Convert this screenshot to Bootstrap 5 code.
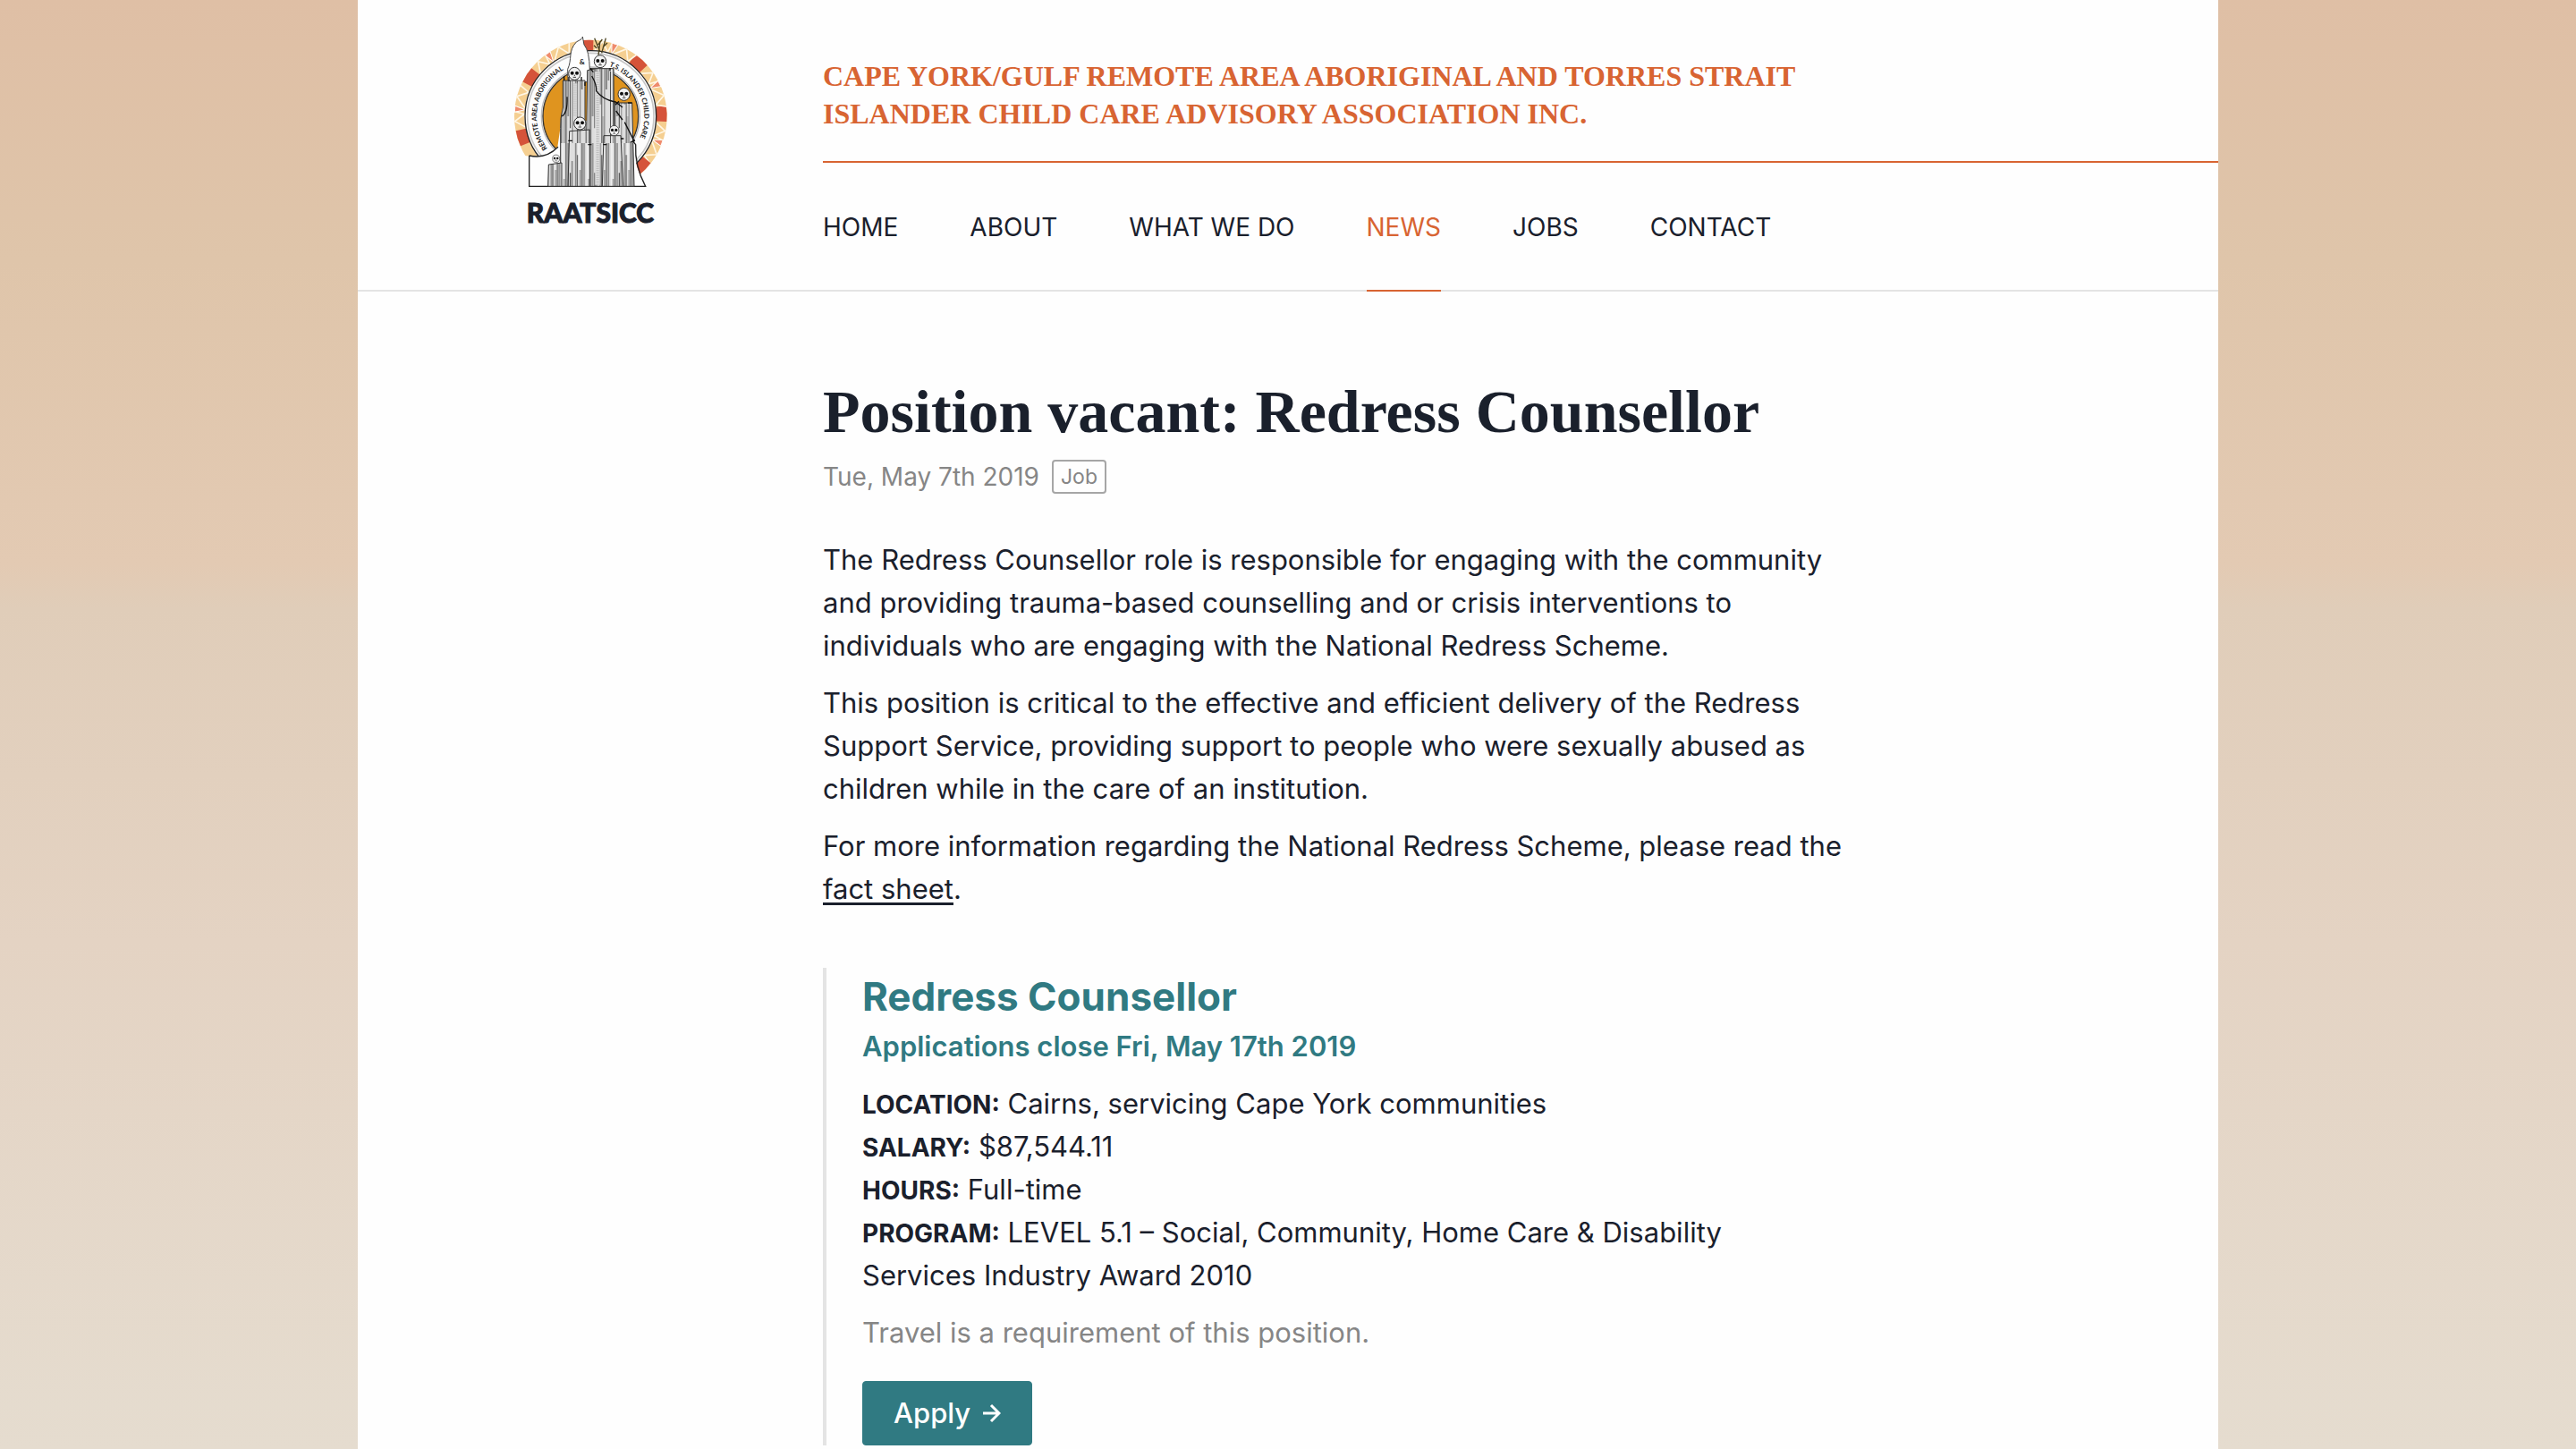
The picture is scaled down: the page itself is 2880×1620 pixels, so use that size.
<!DOCTYPE html>
<html lang="en">
<head>
<meta charset="utf-8">
<meta name="viewport" content="width=device-width, initial-scale=1">
<title>Position vacant: Redress Counsellor – RAATSICC</title>
<link rel="stylesheet" href="https://cdn.jsdelivr.net/npm/bootstrap@5.3.0/dist/css/bootstrap.min.css">
<style>
:root { --ink: #1a202c; --rust: #d86432; --teal: #307a82; --rule: #e4e4e4; --dim: #868686; }
html { overflow: hidden; }
body {
  font-family: Inter, "Liberation Sans", sans-serif;
  font-size: 31px; line-height: 48px; color: var(--ink);
  min-height: 100vh;
  background: linear-gradient(#dfbfa5 0, #dfc5aa 18%, #e3cab3 39%, #e0cdb9 42%, #e4d3c3 65%, #e5dccf 100%);
}
.sheet { width: 72.2223%; min-height: 100vh; background: #fefefe; }
.site-head { border-bottom: 2px solid var(--rule); }
.org-name {
  font: bold 32px/42px "Liberation Serif", serif;
  color: var(--rust); border-bottom: 2px solid var(--rust);
  padding: 64px 0 32px;
}
.brand { color: var(--ink); text-decoration: none; padding-top: 30px; }
.brand svg { width: 200px; height: 184px; }
.brand-word { font: 900 30px/46px Lato, sans-serif; -webkit-text-stroke: 1px currentColor; }
.site-nav { gap: 80px; margin-bottom: -2px; }
.site-nav .nav-link {
  font-size: 28px; line-height: 42px; color: var(--ink);
  padding: 51px 0 49px; border-bottom: 2px solid transparent;
}
.site-nav .nav-link.active { color: var(--rust); border-color: var(--rust); }
.article { padding-top: 98px; }
.article h1 { font: bold 68px/72px "Liberation Serif", serif; margin: 0 0 16px; }
.post-meta { font-size: 28px; line-height: 42px; color: var(--dim); gap: 14px; margin-bottom: 48px; }
.tag { font-size: 23px; line-height: 34px; border: 2px solid #a6a6a6; border-radius: 4px; padding: 0 8px; }
.copy { max-width: 1140px; }
.copy p { margin-bottom: 16px; }
.copy a { color: inherit; text-underline-offset: 4px; }
.vacancy { border-left: 4px solid var(--rule); padding-left: 40px; margin-top: 64px; max-width: 1100px; }
.vacancy h2 { font-size: 44px; line-height: 64px; font-weight: 700; color: var(--teal); margin: 0; }
.closing { font-weight: 600; color: var(--teal); }
.vacancy dt { font-size: 28px; line-height: 32px; display: inline; }
.vacancy dd { display: inline; margin: 0; }
.travel { color: var(--dim); }
.apply-btn { --bs-btn-bg: var(--teal); --bs-btn-color: #fff; --bs-btn-border-color: var(--teal);
  --bs-btn-hover-bg: #28676e; --bs-btn-hover-color: #fff;
  font-size: 31px; line-height: 48px; font-weight: 500; border-radius: 4px; padding: 11px 34px; margin-top: 14px; gap: 14px; }
</style>
</head>
<body>
<div class="sheet mx-auto">
  <header class="site-head row g-0">
    <div class="col-3">
      <a class="brand d-flex flex-column align-items-center" href="#">
        <svg viewBox="0 0 600 552" aria-hidden="true">
          <defs>
            <g id="tile">
              <path d="M220-24 254-27Q258 0 254 27L220 24Z" fill="#d5533a"/>
              <path d="M240 88 232 108 203 85Z" fill="#ef8b6c" stroke="#fff" stroke-width="3"/>
              <path d="M220 30 248 58 210 72 236 88M203 92 217 136 175 137 195 168" fill="none" stroke="#fff6e4" stroke-width="5"/>
            </g>
            <pattern id="grain" width="82" height="390" patternUnits="userSpaceOnUse">
              <rect width="82" height="390" fill="#dedede"/>
              <path d="M5 0V260M19 90V390M33 0V180M48 120V390M62 0V300M75 60V390" stroke="#8a8a8a" stroke-width="5"/>
              <path d="M11 40V390M26 0V210M40 150V390M55 0V390M69 100V340" stroke="#333" stroke-width="3"/>
              <path d="M15 0V300M44 0V390M72 150V390" stroke="#fff" stroke-width="3"/>
            </pattern>
            <g id="mask">
              <ellipse rx="20" ry="21" fill="#f2f2f2" stroke="#333" stroke-width="3"/>
              <circle cx="-8" cy="-2" r="6" fill="#111"/><circle cx="8" cy="-2" r="6" fill="#111"/>
              <path d="M-5 12H5M0 4V8" stroke="#333" stroke-width="3"/>
            </g>
            <path id="arcL" d="M156 408A180 180 0 0 1 241 130"/>
            <path id="arcR" d="M363 132A179 179 0 0 1 440 414"/>
            <clipPath id="ringClip"><path d="M0 0H600V505H420V440H0Z"/></clipPath>
          </defs>
          <g clip-path="url(#ringClip)">
            <circle cx="301" cy="300" r="239" fill="#fff" stroke="#f5cf91" stroke-width="34"/>
            <g transform="translate(301 300)">
              <use href="#tile" transform="rotate(-2)"/><use href="#tile" transform="rotate(-48)"/>
              <use href="#tile" transform="rotate(-94)"/><use href="#tile" transform="rotate(-147)"/>
              <use href="#tile" transform="rotate(163)"/><use href="#tile" transform="rotate(44)"/>
            </g>
          </g>
          <circle cx="301" cy="300" r="220" fill="#fdfdfd" stroke="#222" stroke-width="4"/>
          <circle cx="301" cy="300" r="212" fill="none" stroke="#c8c8c8" stroke-width="5"/>
          <circle cx="301" cy="300" r="160" fill="#df941f" stroke="#333" stroke-width="4"/>
          <circle cx="301" cy="300" r="165" fill="none" stroke="#bbb" stroke-width="4"/>
          <path d="M80 432Q150 445 190 403L205 300 420 340 448 405Q445 465 485 535L520 560H80Z" fill="#fefefe"/>
          <g font-family="Lato, sans-serif" font-weight="700" font-size="23" fill="#222">
            <text><textPath href="#arcL">REMOTE AREA ABORIGINAL</textPath></text>
            <text><textPath href="#arcR">T.S. ISLANDER CHILD CARE</textPath></text>
          </g>
          <path d="M95 432Q150 445 192 403M95 432V535H485Q448 465 452 395L438 378" fill="none" stroke="#222" stroke-width="4"/>
          <path d="M224 142C240 110 224 80 254 50Q276 40 274 33L279 60Q297 80 298 145L300 185H225Z" fill="#fefefe" stroke="#444" stroke-width="3"/>
          <g fill="url(#grain)" stroke="#333" stroke-width="3">
            <path d="M208 180H282V535H200V340Q198 310 208 270Z"/>
            <path d="M290 146 318 140H378L381 535H285Z"/>
            <path d="M379 255H440L447 535H378Z"/>
            <path d="M230 350 298 345V535H225Z"/>
            <path d="M345 365H402L410 535H340Z"/>
            <path d="M160 462 204 456V535H158Z"/>
          </g>
          <path d="M316 150H332V530H316ZM243 190H256V300H243Z" fill="#ddd"/>
          <path d="M322 150V530M327 150V530M246 190V300M252 190V300" stroke="#999" stroke-width="2" stroke-dasharray="3 3"/>
          <path d="M305 165Q322 195 320 215 340 243 382 252M382 250 408 270M386 282 408 312M415 320 448 385M204 300Q224 292 222 235" fill="none" stroke="#111" stroke-width="4"/>
          <path d="M212 180V166M228 182V168M270 180V168M282 185V198M310 152 300 140M366 148V138M292 395H304M226 382H240M343 395H355M402 375H412M434 388 450 380M396 250 384 262M426 255H440" stroke="#111" stroke-width="4"/>
          <path d="M327 95 333 48M333 84 314 38M338 88 352 38M322 72 312 62M342 68 357 54M326 60 340 42" stroke="#4b421f" stroke-width="4" fill="none"/>
          <use href="#mask" x="247" y="157"/><use href="#mask" x="333" y="116"/>
          <use href="#mask" x="413" y="226"/><use href="#mask" x="265" y="324"/>
          <use href="#mask" transform="translate(380 348) scale(.8)"/><use href="#mask" transform="translate(185 442) scale(.6)"/>
          <text x="263" y="125" font-family="Lato, sans-serif" font-weight="700" font-size="25" fill="#222">&amp;</text>
        </svg>
        <span class="brand-word">RAATSICC</span>
      </a>
    </div>
    <div class="col-9">
      <div class="org-name text-uppercase">Cape York/Gulf Remote Area Aboriginal and Torres Strait<br>Islander Child Care Advisory Association Inc.</div>
      <nav class="site-nav nav text-uppercase" aria-label="Main">
        <a class="nav-link" href="#">Home</a>
        <a class="nav-link" href="#">About</a>
        <a class="nav-link" href="#">What we do</a>
        <a class="nav-link active" aria-current="page" href="#">News</a>
        <a class="nav-link" href="#">Jobs</a>
        <a class="nav-link" href="#">Contact</a>
      </nav>
    </div>
  </header>
  <main class="row g-0">
    <article class="article col-9 offset-3">
      <h1>Position vacant: Redress Counsellor</h1>
      <div class="post-meta d-flex align-items-center"><time datetime="2019-05-07">Tue, May 7th 2019</time><span class="tag">Job</span></div>
      <div class="copy">
        <p>The Redress Counsellor role is responsible for engaging with the community and providing trauma-based counselling and or crisis interventions to individuals who are engaging with the National Redress Scheme.</p>
        <p>This position is critical to the effective and efficient delivery of the Redress Support Service, providing support to people who were sexually abused as children while in the care of an institution.</p>
        <p>For more information regarding the National Redress Scheme, please read the <a href="#">fact sheet</a>.</p>
      </div>
      <section class="vacancy">
        <h2>Redress Counsellor</h2>
        <p class="closing mb-3">Applications close Fri, May 17th 2019</p>
        <dl class="mb-3">
          <div><dt class="text-uppercase">Location:</dt> <dd>Cairns, servicing Cape York communities</dd></div>
          <div><dt class="text-uppercase">Salary:</dt> <dd>$87,544.11</dd></div>
          <div><dt class="text-uppercase">Hours:</dt> <dd>Full-time</dd></div>
          <div><dt class="text-uppercase">Program:</dt> <dd>LEVEL 5.1 – Social, Community, Home Care &amp; Disability Services Industry Award 2010</dd></div>
        </dl>
        <p class="travel mb-3">Travel is a requirement of this position.</p>
        <button type="button" class="btn apply-btn d-inline-flex align-items-center">Apply
          <svg width="20" height="22" viewBox="0 0 20 22" fill="none" stroke="currentColor" stroke-width="3" aria-hidden="true"><path d="M0 11H18M9 2 18 11 9 20"/></svg>
        </button>
      </section>
    </article>
  </main>
</div>
<script src="https://cdn.jsdelivr.net/npm/bootstrap@5.3.0/dist/js/bootstrap.bundle.min.js"></script>
</body>
</html>
